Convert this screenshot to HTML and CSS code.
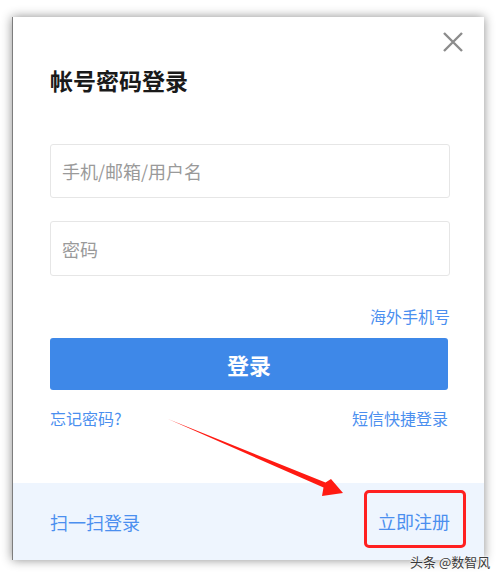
FILE: index.html
```html
<!DOCTYPE html>
<html lang="zh-CN">
    <head>
        <meta charset="UTF-8">
        <meta name="viewport" content="width=device-width, initial-scale=1.0">
        <title>帐号密码登录</title>
        <link rel="stylesheet" href="styles.css">
    </head>
    <body>
        <div class="clCaixa">
            <span class="clFechar">
                <svg width="20" height="20" viewBox="0 0 20 20">
                    <path d="M1 1 L19 19 M19 1 L1 19" stroke="#8c8c8c" stroke-width="2.4" fill="none"/>
                </svg>
            </span>
            <div class="clCorpo">
                <h2 class="clTitulo">帐号密码登录</h2>
                <input type="text" class="clCampo clPrimeiro" placeholder="手机/邮箱/用户名">
                <input type="password" class="clCampo clSegundo" placeholder="密码">
                <div class="clLinhaDireita">
                    <a href="#" class="clLink">海外手机号</a>
                </div>
                <button type="button" class="clBotao">登录</button>
                <div class="clLinha">
                    <a href="#" class="clLink">忘记密码?</a>
                    <a href="#" class="clLink">短信快捷登录</a>
                </div>
            </div>
            <div class="clRodape">
                <a href="#" class="clLinkGrande">扫一扫登录</a>
                <a href="#" class="clLinkGrande clRegistro">立即注册</a>
            </div>
        </div>
        <!-- seta vermelha da anotação -->
        <svg class="clSeta" width="500" height="578" viewBox="0 0 500 578">
            <polygon points="168,419 325.5,482.5 331,479 343,493 322,496 323.5,487.5" fill="#ff1a12"/>
        </svg>
        <div class="clMarca">头条 @数智风</div>
    </body>
</html>
```

FILE: styles.css
```css
*{
    margin: 0px;
    padding: 0px;
    box-sizing: border-box;
}
body{
    background: white;
    font-family: "Noto Sans CJK SC", "Noto Sans", sans-serif;
    width: 500px;
    height: 578px;
    position: relative;
    overflow: hidden;
}
.clCaixa{
    position: relative;
    margin-top: 17px;
    margin-left: 12px;
    width: 472px;
    height: 543px;
    background: white;
    border-left: 1px solid #7d7d7d;
    box-shadow: 0 0 10px rgba(0, 0, 0, 0.45);
    display: flex;
    flex-direction: column;
}
.clFechar{
    position: absolute;
    top: 15px;
    right: 21px;
    width: 20px;
    height: 20px;
}
.clCorpo{
    padding: 46px 34px 0px 37px;
    height: 466px;
    display: flex;
    flex-direction: column;
}
.clTitulo{
    font-size: 23px;
    line-height: 34px;
    font-weight: bold;
    color: #1a1a1a;
}
.clCampo{
    width: 400px;
    height: 54px;
    border: 1px solid #e6e6e6;
    border-radius: 3px;
    padding-left: 11px;
    font-family: inherit;
    font-size: 18px;
    color: #333;
    outline: none;
}
.clCampo::placeholder{
    color: #9a9a9a;
}
.clPrimeiro{
    margin-top: 47px;
}
.clSegundo{
    margin-top: 23px;
    height: 55px;
}
.clLinhaDireita{
    margin-top: 30px;
    text-align: right;
    line-height: 20px;
}
.clLink{
    color: #4b8fef;
    font-size: 16px;
    line-height: 20px;
    text-decoration: none;
}
.clBotao{
    margin-top: 12px;
    width: 398px;
    height: 52px;
    border: none;
    border-radius: 3px;
    background: #3e88e8;
    color: white;
    font-family: inherit;
    font-size: 22px;
    font-weight: bold;
}
.clLinha{
    margin-top: 18px;
    width: 398px;
    display: flex;
    justify-content: space-between;
    line-height: 20px;
}
.clRodape{
    flex: 1;
    background: #eef5fe;
    padding: 0px 18px 0px 37px;
    display: flex;
    justify-content: space-between;
    align-items: center;
}
.clLinkGrande{
    color: #4b8fef;
    font-size: 18px;
    line-height: 24px;
    text-decoration: none;
}
.clRegistro{
    border: 3px solid #ff2020;
    border-radius: 5px;
    padding: 16px 13px 12px 11px;
    margin-bottom: 6px;
}
.clSeta{
    position: absolute;
    top: 0px;
    left: 0px;
}
.clMarca{
    position: absolute;
    left: 410px;
    top: 553px;
    font-size: 13px;
    line-height: 18px;
    color: #3a3a3a;
    text-shadow: 0 0 2px white, 0 0 2px white;
}
```
